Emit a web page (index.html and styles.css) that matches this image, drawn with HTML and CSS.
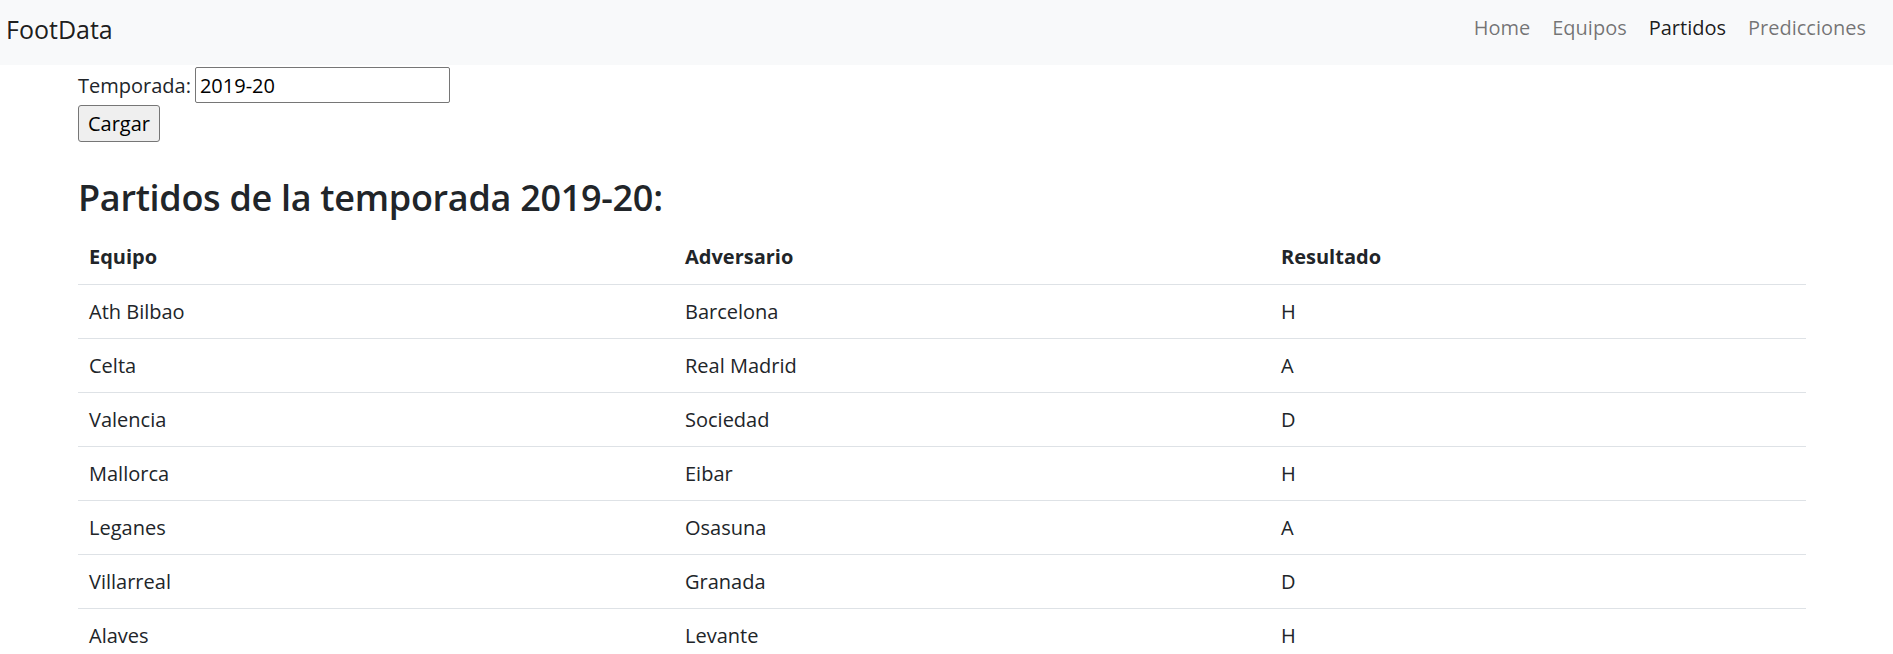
FILE: index.html
```html
<!DOCTYPE html>
<html lang="es">
<head>
<meta charset="utf-8">
<title>FootData</title>
<link rel="stylesheet" href="styles.css">
</head>
<body>
<nav class="navbar">
  <a class="brand" href="#">FootData</a>
  <ul class="nav">
    <li><a class="nav-link" href="#">Home</a></li>
    <li><a class="nav-link" href="#">Equipos</a></li>
    <li><a class="nav-link active" href="#">Partidos</a></li>
    <li><a class="nav-link" href="#">Predicciones</a></li>
  </ul>
</nav>
<main class="container">
  <form class="season-form">
    <div class="field">
      <label for="temporada">Temporada:</label>
      <input id="temporada" type="text" value="2019-20">
    </div>
    <button type="button" class="btn">Cargar</button>
  </form>
  <h2 class="title">Partidos de la temporada 2019-20:</h2>
  <table class="table">
    <thead>
      <tr><th class="c1">Equipo</th><th class="c2">Adversario</th><th class="c3">Resultado</th></tr>
    </thead>
    <tbody>
      <tr><td>Ath Bilbao</td><td>Barcelona</td><td>H</td></tr>
      <tr><td>Celta</td><td>Real Madrid</td><td>A</td></tr>
      <tr><td>Valencia</td><td>Sociedad</td><td>D</td></tr>
      <tr><td>Mallorca</td><td>Eibar</td><td>H</td></tr>
      <tr><td>Leganes</td><td>Osasuna</td><td>A</td></tr>
      <tr><td>Villarreal</td><td>Granada</td><td>D</td></tr>
      <tr><td>Alaves</td><td>Levante</td><td>H</td></tr>
      <tr><td>Espanol</td><td>Sevilla</td><td>A</td></tr>
      <tr><td>Betis</td><td>Valladolid</td><td>A</td></tr>
      <tr><td>Ath Madrid</td><td>Getafe</td><td>H</td></tr>
    </tbody>
  </table>
</main>
</body>
</html>
```
FILE: styles.css
```css
* { box-sizing: border-box; }
html, body { margin: 0; padding: 0; }
body {
  font-family: "Open Sans", "Noto Sans", sans-serif;
  font-size: 20px;
  color: #212529;
  background: #fff;
}
.navbar {
  height: 65px;
  background: #f8f9fa;
  display: flex;
  align-items: flex-start;
  justify-content: space-between;
  padding: 0 16px 0 6px;
}
.brand {
  margin-top: 17px;
  font-size: 25px;
  line-height: 25px;
  color: rgba(0,0,0,.9);
  text-decoration: none;
}
.nav {
  list-style: none;
  margin: 13px 0 0;
  padding: 0;
  display: flex;
}
.nav-link {
  display: block;
  padding: 0 11px;
  font-size: 20px;
  line-height: 30px;
  color: rgba(0,0,0,.55);
  text-decoration: none;
}
.nav-link.active { color: rgba(0,0,0,.9); }
.container {
  padding: 0 87px 0 78px;
}
.season-form { margin: 0; }
.field {
  display: flex;
  align-items: center;
  gap: 4px;
  margin-top: 2px;
  height: 36px;
}
.field label { font-size: 20px; }
.field input {
  width: 255px;
  height: 36px;
  border: 1px solid #767676;
  border-radius: 2px;
  padding: 1px 4px;
  font-family: inherit;
  font-size: 20px;
  color: #000;
}
.btn {
  margin-top: 2px;
  width: 82px;
  height: 37px;
  border: 1px solid #767676;
  border-radius: 3px;
  background: #efefef;
  font-family: inherit;
  font-size: 20px;
  color: #000;
  padding: 0;
}
.title {
  margin: 0;
  padding-top: 34px;
  font-size: 36px;
  font-weight: 600;
  letter-spacing: -0.3px;
  line-height: 44px;
  height: 88px;
}
.table {
  width: 1728px;
  border-collapse: collapse;
}
.table th, .table td {
  text-align: left;
  padding: 11px 11px 10px;
  line-height: 32px;
  height: 54px;
  border-bottom: 1px solid #dee2e6;
  vertical-align: top;
}
.table th { font-weight: 700; }
.c1, .c2 { width: 596px; }
```
